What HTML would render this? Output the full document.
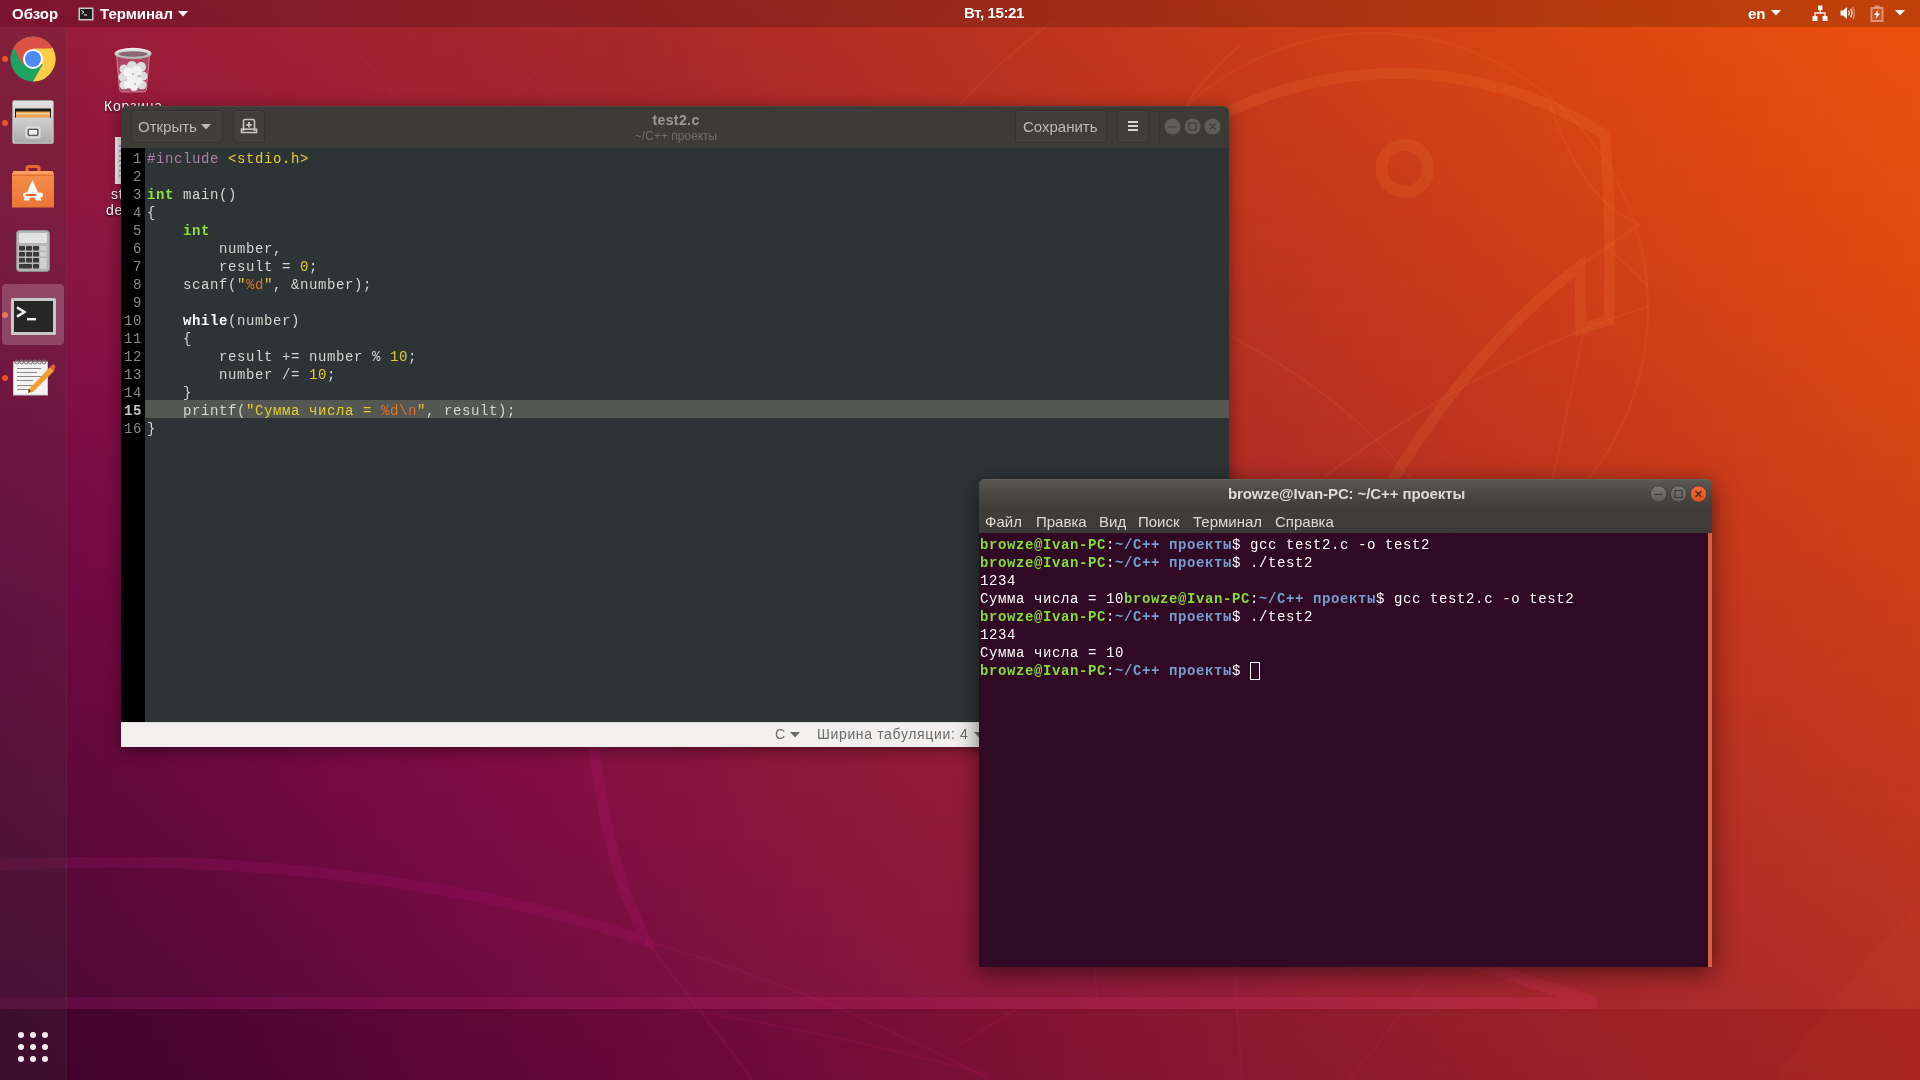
<!DOCTYPE html>
<html><head><meta charset="utf-8">
<style>
*{box-sizing:border-box;margin:0;padding:0}
html,body{width:1920px;height:1080px;overflow:hidden}
body{position:relative;font-family:"Liberation Sans",sans-serif;background:#a02030}
.abs{position:absolute}
#gedit,#term,#topbar,#dock,.dlab{will-change:transform}
#wall{position:absolute;left:0;top:0;width:1920px;height:1080px;overflow:hidden}
.ws{position:absolute;left:0;width:1920px}
#topbar{position:absolute;left:0;top:0;width:1920px;height:27px;background:rgba(0,0,0,0.18);color:#fff;font-size:15px;font-weight:bold}
#dock{position:absolute;left:0;top:27px;width:67px;height:1053px;background:rgba(62,62,56,0.2);box-shadow:inset -1px 0 rgba(255,255,255,0.03)}
.tb{font-size:15px;font-weight:bold;color:#fff;white-space:nowrap;line-height:18px;margin-top:1px}
.dot{width:6px;height:6px;border-radius:3px;background:#e95420}
.btn{border:1px solid #33322e;border-radius:4px;background:#3f3e3a;box-shadow:inset 0 1px rgba(255,255,255,0.03)}
.gt{font-size:15px;color:#bdbab3;white-space:nowrap}
.ln{color:#888a85}
.pp{color:#ad7fa8}.st{color:#e3cf2c}.ty{color:#8ae234;font-weight:bold}.sp{color:#de6e2c}
.tm{font-size:15px;color:#dfdbd2;white-space:nowrap}
.tg{color:#85dc36;font-weight:bold}.tb2{color:#729fcf;font-weight:bold}
.dlab{font-size:14px;letter-spacing:0.8px;color:#fff;white-space:nowrap;text-shadow:0 1px 2px rgba(0,0,0,0.8)}
.code{font-family:"Liberation Mono",monospace;font-size:14px;letter-spacing:0.6px;line-height:18px;white-space:pre}
</style></head>
<body>
<div id="wall"><!--WALL-->
<div class="ws" style="top:0px;height:12px;background:linear-gradient(90deg,rgb(150,26,59) 0.0%,rgb(157,30,55) 8.3%,rgb(162,34,49) 16.7%,rgb(166,38,43) 25.0%,rgb(171,41,40) 33.3%,rgb(178,45,35) 41.7%,rgb(186,50,31) 50.0%,rgb(196,55,27) 58.3%,rgb(205,61,23) 66.7%,rgb(214,66,20) 75.0%,rgb(222,71,17) 83.3%,rgb(230,76,14) 91.7%,rgb(237,81,11) 100.0%)"></div>
<div class="ws" style="top:12px;height:12px;background:linear-gradient(90deg,rgb(149,25,59) 0.0%,rgb(156,29,55) 8.3%,rgb(162,34,49) 16.7%,rgb(166,38,44) 25.0%,rgb(170,41,40) 33.3%,rgb(177,45,36) 41.7%,rgb(186,50,32) 50.0%,rgb(195,55,27) 58.3%,rgb(204,61,23) 66.7%,rgb(213,66,20) 75.0%,rgb(221,71,17) 83.3%,rgb(229,76,14) 91.7%,rgb(236,80,12) 100.0%)"></div>
<div class="ws" style="top:24px;height:12px;background:linear-gradient(90deg,rgb(149,25,60) 0.0%,rgb(156,29,56) 8.3%,rgb(161,33,49) 16.7%,rgb(165,37,44) 25.0%,rgb(169,41,40) 33.3%,rgb(176,45,36) 41.7%,rgb(185,49,32) 50.0%,rgb(194,55,28) 58.3%,rgb(204,60,24) 66.7%,rgb(212,66,20) 75.0%,rgb(221,71,17) 83.3%,rgb(228,75,15) 91.7%,rgb(236,80,12) 100.0%)"></div>
<div class="ws" style="top:36px;height:12px;background:linear-gradient(90deg,rgb(148,25,60) 0.0%,rgb(155,29,56) 8.3%,rgb(160,33,50) 16.7%,rgb(164,37,45) 25.0%,rgb(168,40,41) 33.3%,rgb(176,44,37) 41.7%,rgb(184,49,32) 50.0%,rgb(194,54,28) 58.3%,rgb(203,60,24) 66.7%,rgb(212,65,21) 75.0%,rgb(220,70,17) 83.3%,rgb(228,75,15) 91.7%,rgb(235,80,12) 100.0%)"></div>
<div class="ws" style="top:48px;height:12px;background:linear-gradient(90deg,rgb(147,24,61) 0.0%,rgb(154,28,56) 8.3%,rgb(160,33,50) 16.7%,rgb(164,36,45) 25.0%,rgb(168,40,41) 33.3%,rgb(175,44,37) 41.7%,rgb(184,49,33) 50.0%,rgb(193,54,28) 58.3%,rgb(202,60,25) 66.7%,rgb(211,65,21) 75.0%,rgb(219,70,18) 83.3%,rgb(227,75,15) 91.7%,rgb(235,79,12) 100.0%)"></div>
<div class="ws" style="top:60px;height:12px;background:linear-gradient(90deg,rgb(146,24,61) 0.0%,rgb(154,28,57) 8.3%,rgb(159,32,51) 16.7%,rgb(163,36,46) 25.0%,rgb(167,39,42) 33.3%,rgb(174,44,38) 41.7%,rgb(183,48,33) 50.0%,rgb(192,54,29) 58.3%,rgb(202,59,25) 66.7%,rgb(210,65,21) 75.0%,rgb(219,69,18) 83.3%,rgb(227,74,15) 91.7%,rgb(234,79,13) 100.0%)"></div>
<div class="ws" style="top:72px;height:12px;background:linear-gradient(90deg,rgb(146,24,61) 0.0%,rgb(153,28,57) 8.3%,rgb(158,32,51) 16.7%,rgb(162,36,46) 25.0%,rgb(167,39,42) 33.3%,rgb(174,43,38) 41.7%,rgb(183,48,33) 50.0%,rgb(192,53,29) 58.3%,rgb(201,59,25) 66.7%,rgb(210,64,21) 75.0%,rgb(218,69,18) 83.3%,rgb(226,74,16) 91.7%,rgb(233,79,13) 100.0%)"></div>
<div class="ws" style="top:84px;height:12px;background:linear-gradient(90deg,rgb(145,24,62) 0.0%,rgb(152,27,58) 8.3%,rgb(158,31,52) 16.7%,rgb(162,35,47) 25.0%,rgb(166,39,43) 33.3%,rgb(173,43,38) 41.7%,rgb(182,48,34) 50.0%,rgb(191,53,29) 58.3%,rgb(201,59,26) 66.7%,rgb(209,64,22) 75.0%,rgb(218,69,18) 83.3%,rgb(226,74,16) 91.7%,rgb(233,78,13) 100.0%)"></div>
<div class="ws" style="top:96px;height:12px;background:linear-gradient(90deg,rgb(144,23,62) 0.0%,rgb(151,27,58) 8.3%,rgb(157,31,52) 16.7%,rgb(161,35,47) 25.0%,rgb(165,38,43) 33.3%,rgb(173,42,39) 41.7%,rgb(181,47,34) 50.0%,rgb(191,53,30) 58.3%,rgb(200,59,26) 66.7%,rgb(209,64,22) 75.0%,rgb(217,68,19) 83.3%,rgb(225,73,16) 91.7%,rgb(232,78,13) 100.0%)"></div>
<div class="ws" style="top:108px;height:12px;background:linear-gradient(90deg,rgb(143,23,62) 0.0%,rgb(151,27,59) 8.3%,rgb(156,31,53) 16.7%,rgb(161,34,48) 25.0%,rgb(165,38,44) 33.3%,rgb(172,42,39) 41.7%,rgb(181,47,35) 50.0%,rgb(190,52,30) 58.3%,rgb(199,58,26) 66.7%,rgb(208,63,22) 75.0%,rgb(216,68,19) 83.3%,rgb(224,73,16) 91.7%,rgb(232,78,13) 100.0%)"></div>
<div class="ws" style="top:120px;height:12px;background:linear-gradient(90deg,rgb(143,23,63) 0.0%,rgb(150,26,59) 8.3%,rgb(156,30,53) 16.7%,rgb(160,34,48) 25.0%,rgb(164,37,44) 33.3%,rgb(171,42,40) 41.7%,rgb(180,47,35) 50.0%,rgb(189,52,31) 58.3%,rgb(199,58,27) 66.7%,rgb(207,63,23) 75.0%,rgb(216,68,19) 83.3%,rgb(224,73,17) 91.7%,rgb(231,77,14) 100.0%)"></div>
<div class="ws" style="top:132px;height:12px;background:linear-gradient(90deg,rgb(142,22,63) 0.0%,rgb(149,26,60) 8.3%,rgb(155,30,54) 16.7%,rgb(159,33,49) 25.0%,rgb(164,37,45) 33.3%,rgb(171,41,40) 41.7%,rgb(179,46,35) 50.0%,rgb(189,52,31) 58.3%,rgb(198,58,27) 66.7%,rgb(207,63,23) 75.0%,rgb(215,67,20) 83.3%,rgb(223,72,17) 91.7%,rgb(231,77,14) 100.0%)"></div>
<div class="ws" style="top:144px;height:12px;background:linear-gradient(90deg,rgb(141,22,63) 0.0%,rgb(149,26,60) 8.3%,rgb(154,29,54) 16.7%,rgb(159,33,49) 25.0%,rgb(163,36,45) 33.3%,rgb(170,41,41) 41.7%,rgb(179,46,36) 50.0%,rgb(188,51,31) 58.3%,rgb(197,57,27) 66.7%,rgb(206,62,23) 75.0%,rgb(215,67,20) 83.3%,rgb(223,72,17) 91.7%,rgb(230,77,14) 100.0%)"></div>
<div class="ws" style="top:156px;height:12px;background:linear-gradient(90deg,rgb(140,22,64) 0.0%,rgb(148,25,60) 8.3%,rgb(154,29,55) 16.7%,rgb(158,32,50) 25.0%,rgb(163,36,45) 33.3%,rgb(170,40,41) 41.7%,rgb(178,45,36) 50.0%,rgb(187,51,32) 58.3%,rgb(197,57,28) 66.7%,rgb(205,62,24) 75.0%,rgb(214,67,20) 83.3%,rgb(222,72,17) 91.7%,rgb(229,76,14) 100.0%)"></div>
<div class="ws" style="top:168px;height:12px;background:linear-gradient(90deg,rgb(139,21,64) 0.0%,rgb(147,25,61) 8.3%,rgb(153,28,55) 16.7%,rgb(157,32,50) 25.0%,rgb(162,36,46) 33.3%,rgb(169,40,41) 41.7%,rgb(178,45,37) 50.0%,rgb(187,51,32) 58.3%,rgb(196,57,28) 66.7%,rgb(205,61,24) 75.0%,rgb(213,66,20) 83.3%,rgb(222,71,18) 91.7%,rgb(229,76,15) 100.0%)"></div>
<div class="ws" style="top:180px;height:12px;background:linear-gradient(90deg,rgb(139,21,64) 0.0%,rgb(146,25,61) 8.3%,rgb(152,28,56) 16.7%,rgb(157,32,51) 25.0%,rgb(162,35,46) 33.3%,rgb(169,40,42) 41.7%,rgb(177,45,37) 50.0%,rgb(186,50,33) 58.3%,rgb(195,56,28) 66.7%,rgb(204,61,24) 75.0%,rgb(213,66,21) 83.3%,rgb(221,71,18) 91.7%,rgb(228,76,15) 100.0%)"></div>
<div class="ws" style="top:192px;height:12px;background:linear-gradient(90deg,rgb(138,21,65) 0.0%,rgb(146,24,62) 8.3%,rgb(152,28,57) 16.7%,rgb(156,31,51) 25.0%,rgb(161,35,47) 33.3%,rgb(168,39,42) 41.7%,rgb(176,44,38) 50.0%,rgb(186,50,33) 58.3%,rgb(195,56,29) 66.7%,rgb(203,61,24) 75.0%,rgb(212,65,21) 83.3%,rgb(221,70,18) 91.7%,rgb(228,75,15) 100.0%)"></div>
<div class="ws" style="top:204px;height:12px;background:linear-gradient(90deg,rgb(137,20,65) 0.0%,rgb(145,24,62) 8.3%,rgb(151,27,57) 16.7%,rgb(156,31,52) 25.0%,rgb(161,34,47) 33.3%,rgb(168,39,43) 41.7%,rgb(176,44,38) 50.0%,rgb(185,50,33) 58.3%,rgb(194,55,29) 66.7%,rgb(203,60,25) 75.0%,rgb(212,65,21) 83.3%,rgb(220,70,18) 91.7%,rgb(227,75,15) 100.0%)"></div>
<div class="ws" style="top:216px;height:12px;background:linear-gradient(90deg,rgb(136,20,65) 0.0%,rgb(144,23,63) 8.3%,rgb(150,27,58) 16.7%,rgb(155,30,53) 25.0%,rgb(160,34,48) 33.3%,rgb(167,39,43) 41.7%,rgb(175,44,38) 50.0%,rgb(184,49,34) 58.3%,rgb(193,55,29) 66.7%,rgb(202,60,25) 75.0%,rgb(211,64,22) 83.3%,rgb(219,70,19) 91.7%,rgb(226,75,16) 100.0%)"></div>
<div class="ws" style="top:228px;height:12px;background:linear-gradient(90deg,rgb(135,20,65) 0.0%,rgb(143,23,63) 8.3%,rgb(149,26,58) 16.7%,rgb(155,30,53) 25.0%,rgb(160,34,48) 33.3%,rgb(166,38,44) 41.7%,rgb(175,43,39) 50.0%,rgb(184,49,34) 58.3%,rgb(193,55,30) 66.7%,rgb(201,59,25) 75.0%,rgb(210,64,22) 83.3%,rgb(219,69,19) 91.7%,rgb(226,74,16) 100.0%)"></div>
<div class="ws" style="top:240px;height:12px;background:linear-gradient(90deg,rgb(135,19,66) 0.0%,rgb(142,23,63) 8.3%,rgb(149,26,59) 16.7%,rgb(154,29,54) 25.0%,rgb(159,33,49) 33.3%,rgb(166,38,44) 41.7%,rgb(174,43,39) 50.0%,rgb(183,48,34) 58.3%,rgb(192,54,30) 66.7%,rgb(201,59,26) 75.0%,rgb(210,64,22) 83.3%,rgb(218,69,19) 91.7%,rgb(225,74,16) 100.0%)"></div>
<div class="ws" style="top:252px;height:12px;background:linear-gradient(90deg,rgb(134,19,66) 0.0%,rgb(142,22,64) 8.3%,rgb(148,25,59) 16.7%,rgb(153,29,54) 25.0%,rgb(159,33,49) 33.3%,rgb(165,37,45) 41.7%,rgb(174,43,40) 50.0%,rgb(182,48,35) 58.3%,rgb(191,54,30) 66.7%,rgb(200,58,26) 75.0%,rgb(209,63,22) 83.3%,rgb(218,69,19) 91.7%,rgb(225,74,16) 100.0%)"></div>
<div class="ws" style="top:264px;height:12px;background:linear-gradient(90deg,rgb(133,19,66) 0.0%,rgb(141,22,64) 8.3%,rgb(147,25,60) 16.7%,rgb(153,28,55) 25.0%,rgb(158,32,50) 33.3%,rgb(165,37,45) 41.7%,rgb(173,42,40) 50.0%,rgb(182,48,35) 58.3%,rgb(191,53,31) 66.7%,rgb(199,58,26) 75.0%,rgb(208,63,23) 83.3%,rgb(217,68,20) 91.7%,rgb(224,73,16) 100.0%)"></div>
<div class="ws" style="top:276px;height:12px;background:linear-gradient(90deg,rgb(132,18,67) 0.0%,rgb(140,21,65) 8.3%,rgb(147,24,60) 16.7%,rgb(152,28,55) 25.0%,rgb(158,32,50) 33.3%,rgb(164,37,45) 41.7%,rgb(172,42,40) 50.0%,rgb(181,47,36) 58.3%,rgb(190,53,31) 66.7%,rgb(199,58,27) 75.0%,rgb(208,62,23) 83.3%,rgb(216,68,20) 91.7%,rgb(223,73,17) 100.0%)"></div>
<div class="ws" style="top:288px;height:12px;background:linear-gradient(90deg,rgb(131,18,67) 0.0%,rgb(139,21,65) 8.3%,rgb(146,24,61) 16.7%,rgb(152,27,56) 25.0%,rgb(157,31,51) 33.3%,rgb(164,36,46) 41.7%,rgb(172,41,41) 50.0%,rgb(180,47,36) 58.3%,rgb(189,52,31) 66.7%,rgb(198,57,27) 75.0%,rgb(207,62,23) 83.3%,rgb(216,67,20) 91.7%,rgb(223,72,17) 100.0%)"></div>
<div class="ws" style="top:300px;height:12px;background:linear-gradient(90deg,rgb(130,17,67) 0.0%,rgb(138,20,65) 8.3%,rgb(145,23,61) 16.7%,rgb(151,27,56) 25.0%,rgb(157,31,51) 33.3%,rgb(163,36,46) 41.7%,rgb(171,41,41) 50.0%,rgb(180,47,36) 58.3%,rgb(189,52,32) 66.7%,rgb(197,57,27) 75.0%,rgb(206,61,24) 83.3%,rgb(215,67,21) 91.7%,rgb(222,72,17) 100.0%)"></div>
<div class="ws" style="top:312px;height:12px;background:linear-gradient(90deg,rgb(129,17,67) 0.0%,rgb(138,20,66) 8.3%,rgb(145,23,62) 16.7%,rgb(150,26,57) 25.0%,rgb(156,31,52) 33.3%,rgb(163,36,47) 41.7%,rgb(171,41,42) 50.0%,rgb(179,46,37) 58.3%,rgb(188,51,32) 66.7%,rgb(197,56,28) 75.0%,rgb(206,61,24) 83.3%,rgb(214,66,21) 91.7%,rgb(221,72,17) 100.0%)"></div>
<div class="ws" style="top:324px;height:12px;background:linear-gradient(90deg,rgb(128,16,67) 0.0%,rgb(137,19,66) 8.3%,rgb(144,22,62) 16.7%,rgb(150,26,57) 25.0%,rgb(156,30,52) 33.3%,rgb(162,35,47) 41.7%,rgb(170,40,42) 50.0%,rgb(179,46,37) 58.3%,rgb(187,51,33) 66.7%,rgb(196,56,28) 75.0%,rgb(205,61,24) 83.3%,rgb(214,66,21) 91.7%,rgb(221,71,18) 100.0%)"></div>
<div class="ws" style="top:336px;height:12px;background:linear-gradient(90deg,rgb(128,16,68) 0.0%,rgb(136,19,66) 8.3%,rgb(143,22,63) 16.7%,rgb(149,25,58) 25.0%,rgb(155,30,53) 33.3%,rgb(162,35,48) 41.7%,rgb(170,40,42) 50.0%,rgb(178,45,38) 58.3%,rgb(187,50,33) 66.7%,rgb(195,55,28) 75.0%,rgb(204,60,25) 83.3%,rgb(213,66,21) 91.7%,rgb(220,71,18) 100.0%)"></div>
<div class="ws" style="top:348px;height:12px;background:linear-gradient(90deg,rgb(127,15,68) 0.0%,rgb(135,18,67) 8.3%,rgb(142,21,63) 16.7%,rgb(149,25,58) 25.0%,rgb(155,29,53) 33.3%,rgb(161,34,48) 41.7%,rgb(169,40,43) 50.0%,rgb(177,45,38) 58.3%,rgb(186,50,33) 66.7%,rgb(195,55,29) 75.0%,rgb(204,60,25) 83.3%,rgb(212,65,22) 91.7%,rgb(219,71,18) 100.0%)"></div>
<div class="ws" style="top:360px;height:12px;background:linear-gradient(90deg,rgb(126,15,68) 0.0%,rgb(134,17,67) 8.3%,rgb(142,20,63) 16.7%,rgb(148,24,59) 25.0%,rgb(154,29,54) 33.3%,rgb(161,34,48) 41.7%,rgb(168,39,43) 50.0%,rgb(177,45,38) 58.3%,rgb(185,50,34) 66.7%,rgb(194,54,29) 75.0%,rgb(203,59,25) 83.3%,rgb(211,65,22) 91.7%,rgb(219,70,18) 100.0%)"></div>
<div class="ws" style="top:372px;height:12px;background:linear-gradient(90deg,rgb(125,14,68) 0.0%,rgb(133,17,67) 8.3%,rgb(141,20,64) 16.7%,rgb(147,24,59) 25.0%,rgb(153,28,54) 33.3%,rgb(160,34,49) 41.7%,rgb(168,39,44) 50.0%,rgb(176,44,39) 58.3%,rgb(185,49,34) 66.7%,rgb(193,54,30) 75.0%,rgb(202,59,26) 83.3%,rgb(211,64,22) 91.7%,rgb(218,70,19) 100.0%)"></div>
<div class="ws" style="top:384px;height:12px;background:linear-gradient(90deg,rgb(124,14,68) 0.0%,rgb(133,16,67) 8.3%,rgb(140,19,64) 16.7%,rgb(147,23,60) 25.0%,rgb(153,28,55) 33.3%,rgb(160,33,49) 41.7%,rgb(167,39,44) 50.0%,rgb(175,44,39) 58.3%,rgb(184,49,34) 66.7%,rgb(193,53,30) 75.0%,rgb(202,58,26) 83.3%,rgb(210,64,22) 91.7%,rgb(217,69,19) 100.0%)"></div>
<div class="ws" style="top:396px;height:12px;background:linear-gradient(90deg,rgb(123,14,68) 0.0%,rgb(132,16,68) 8.3%,rgb(140,19,65) 16.7%,rgb(146,23,60) 25.0%,rgb(152,28,55) 33.3%,rgb(159,33,50) 41.7%,rgb(167,38,44) 50.0%,rgb(175,43,39) 58.3%,rgb(183,48,35) 66.7%,rgb(192,53,30) 75.0%,rgb(201,58,27) 83.3%,rgb(209,63,23) 91.7%,rgb(217,69,19) 100.0%)"></div>
<div class="ws" style="top:408px;height:12px;background:linear-gradient(90deg,rgb(122,13,68) 0.0%,rgb(131,15,68) 8.3%,rgb(139,18,65) 16.7%,rgb(146,22,61) 25.0%,rgb(152,27,56) 33.3%,rgb(159,33,50) 41.7%,rgb(166,38,45) 50.0%,rgb(174,43,40) 58.3%,rgb(183,48,35) 66.7%,rgb(191,53,31) 75.0%,rgb(200,57,27) 83.3%,rgb(209,63,23) 91.7%,rgb(216,69,19) 100.0%)"></div>
<div class="ws" style="top:420px;height:12px;background:linear-gradient(90deg,rgb(121,13,68) 0.0%,rgb(130,15,68) 8.3%,rgb(138,18,65) 16.7%,rgb(145,22,61) 25.0%,rgb(151,27,56) 33.3%,rgb(158,32,51) 41.7%,rgb(166,38,45) 50.0%,rgb(174,43,40) 58.3%,rgb(182,47,35) 66.7%,rgb(191,52,31) 75.0%,rgb(200,57,27) 83.3%,rgb(208,63,23) 91.7%,rgb(215,68,20) 100.0%)"></div>
<div class="ws" style="top:432px;height:12px;background:linear-gradient(90deg,rgb(120,12,68) 0.0%,rgb(129,14,68) 8.3%,rgb(137,17,66) 16.7%,rgb(144,21,62) 25.0%,rgb(151,26,57) 33.3%,rgb(157,32,51) 41.7%,rgb(165,37,46) 50.0%,rgb(173,42,41) 58.3%,rgb(181,47,36) 66.7%,rgb(190,52,32) 75.0%,rgb(199,57,28) 83.3%,rgb(207,62,24) 91.7%,rgb(214,68,20) 100.0%)"></div>
<div class="ws" style="top:444px;height:12px;background:linear-gradient(90deg,rgb(119,12,68) 0.0%,rgb(128,14,68) 8.3%,rgb(137,17,66) 16.7%,rgb(144,21,62) 25.0%,rgb(150,26,57) 33.3%,rgb(157,31,51) 41.7%,rgb(164,37,46) 50.0%,rgb(172,42,41) 58.3%,rgb(181,47,36) 66.7%,rgb(189,51,32) 75.0%,rgb(198,56,28) 83.3%,rgb(206,62,24) 91.7%,rgb(214,67,20) 100.0%)"></div>
<div class="ws" style="top:456px;height:12px;background:linear-gradient(90deg,rgb(118,11,68) 0.0%,rgb(127,13,69) 8.3%,rgb(136,16,66) 16.7%,rgb(143,21,62) 25.0%,rgb(150,26,57) 33.3%,rgb(156,31,52) 41.7%,rgb(164,37,46) 50.0%,rgb(172,42,41) 58.3%,rgb(180,46,37) 66.7%,rgb(189,51,32) 75.0%,rgb(198,56,28) 83.3%,rgb(206,61,24) 91.7%,rgb(213,67,20) 100.0%)"></div>
<div class="ws" style="top:468px;height:12px;background:linear-gradient(90deg,rgb(117,11,68) 0.0%,rgb(126,13,69) 8.3%,rgb(135,16,67) 16.7%,rgb(143,20,63) 25.0%,rgb(149,25,58) 33.3%,rgb(156,31,52) 41.7%,rgb(163,36,47) 50.0%,rgb(171,41,42) 58.3%,rgb(179,46,37) 66.7%,rgb(188,50,33) 75.0%,rgb(197,55,29) 83.3%,rgb(205,61,25) 91.7%,rgb(212,67,21) 100.0%)"></div>
<div class="ws" style="top:480px;height:12px;background:linear-gradient(90deg,rgb(116,11,68) 0.0%,rgb(126,12,69) 8.3%,rgb(134,16,67) 16.7%,rgb(142,20,63) 25.0%,rgb(149,25,58) 33.3%,rgb(155,30,52) 41.7%,rgb(163,36,47) 50.0%,rgb(171,41,42) 58.3%,rgb(179,45,37) 66.7%,rgb(188,50,33) 75.0%,rgb(196,55,29) 83.3%,rgb(204,61,25) 91.7%,rgb(211,66,21) 100.0%)"></div>
<div class="ws" style="top:492px;height:12px;background:linear-gradient(90deg,rgb(115,10,68) 0.0%,rgb(125,12,69) 8.3%,rgb(134,15,67) 16.7%,rgb(141,19,64) 25.0%,rgb(148,24,59) 33.3%,rgb(155,30,53) 41.7%,rgb(162,36,47) 50.0%,rgb(170,40,43) 58.3%,rgb(178,45,38) 66.7%,rgb(187,50,33) 75.0%,rgb(195,55,29) 83.3%,rgb(203,60,25) 91.7%,rgb(211,66,21) 100.0%)"></div>
<div class="ws" style="top:504px;height:12px;background:linear-gradient(90deg,rgb(114,10,68) 0.0%,rgb(124,11,69) 8.3%,rgb(133,15,67) 16.7%,rgb(141,19,64) 25.0%,rgb(147,24,59) 33.3%,rgb(154,30,53) 41.7%,rgb(161,35,48) 50.0%,rgb(169,40,43) 58.3%,rgb(178,45,38) 66.7%,rgb(186,49,34) 75.0%,rgb(195,54,30) 83.3%,rgb(203,60,25) 91.7%,rgb(210,65,21) 100.0%)"></div>
<div class="ws" style="top:516px;height:12px;background:linear-gradient(90deg,rgb(113,10,68) 0.0%,rgb(123,11,69) 8.3%,rgb(132,14,67) 16.7%,rgb(140,18,64) 25.0%,rgb(147,24,59) 33.3%,rgb(154,29,54) 41.7%,rgb(161,35,48) 50.0%,rgb(169,40,43) 58.3%,rgb(177,44,39) 66.7%,rgb(186,49,34) 75.0%,rgb(194,54,30) 83.3%,rgb(202,59,26) 91.7%,rgb(209,65,22) 100.0%)"></div>
<div class="ws" style="top:528px;height:12px;background:linear-gradient(90deg,rgb(112,9,67) 0.0%,rgb(122,11,69) 8.3%,rgb(131,14,68) 16.7%,rgb(140,18,65) 25.0%,rgb(146,23,60) 33.3%,rgb(153,29,54) 41.7%,rgb(160,35,49) 50.0%,rgb(168,39,44) 58.3%,rgb(176,44,39) 66.7%,rgb(185,48,35) 75.0%,rgb(193,53,30) 83.3%,rgb(201,59,26) 91.7%,rgb(209,65,22) 100.0%)"></div>
<div class="ws" style="top:540px;height:12px;background:linear-gradient(90deg,rgb(111,9,67) 0.0%,rgb(121,10,68) 8.3%,rgb(131,13,68) 16.7%,rgb(139,18,65) 25.0%,rgb(146,23,60) 33.3%,rgb(152,29,54) 41.7%,rgb(160,34,49) 50.0%,rgb(168,39,44) 58.3%,rgb(176,44,40) 66.7%,rgb(184,48,35) 75.0%,rgb(193,53,31) 83.3%,rgb(201,59,26) 91.7%,rgb(208,64,22) 100.0%)"></div>
<div class="ws" style="top:552px;height:12px;background:linear-gradient(90deg,rgb(110,9,67) 0.0%,rgb(120,10,68) 8.3%,rgb(130,13,68) 16.7%,rgb(138,17,65) 25.0%,rgb(145,23,60) 33.3%,rgb(152,29,55) 41.7%,rgb(159,34,49) 50.0%,rgb(167,39,45) 58.3%,rgb(175,43,40) 66.7%,rgb(184,48,35) 75.0%,rgb(192,53,31) 83.3%,rgb(200,58,27) 91.7%,rgb(207,64,23) 100.0%)"></div>
<div class="ws" style="top:564px;height:12px;background:linear-gradient(90deg,rgb(109,9,66) 0.0%,rgb(119,10,68) 8.3%,rgb(129,13,68) 16.7%,rgb(138,17,66) 25.0%,rgb(145,22,61) 33.3%,rgb(151,28,55) 41.7%,rgb(158,34,50) 50.0%,rgb(166,38,45) 58.3%,rgb(175,43,40) 66.7%,rgb(183,47,36) 75.0%,rgb(191,52,32) 83.3%,rgb(199,58,27) 91.7%,rgb(206,63,23) 100.0%)"></div>
<div class="ws" style="top:576px;height:12px;background:linear-gradient(90deg,rgb(108,9,66) 0.0%,rgb(118,10,68) 8.3%,rgb(128,12,68) 16.7%,rgb(137,16,66) 25.0%,rgb(144,22,61) 33.3%,rgb(151,28,55) 41.7%,rgb(158,33,50) 50.0%,rgb(166,38,45) 58.3%,rgb(174,42,41) 66.7%,rgb(182,47,36) 75.0%,rgb(191,52,32) 83.3%,rgb(198,57,27) 91.7%,rgb(206,63,23) 100.0%)"></div>
<div class="ws" style="top:588px;height:12px;background:linear-gradient(90deg,rgb(107,8,66) 0.0%,rgb(117,10,68) 8.3%,rgb(128,12,68) 16.7%,rgb(136,16,66) 25.0%,rgb(143,22,61) 33.3%,rgb(150,28,55) 41.7%,rgb(157,33,50) 50.0%,rgb(165,38,46) 58.3%,rgb(173,42,41) 66.7%,rgb(182,47,37) 75.0%,rgb(190,51,32) 83.3%,rgb(198,57,28) 91.7%,rgb(205,63,24) 100.0%)"></div>
<div class="ws" style="top:600px;height:12px;background:linear-gradient(90deg,rgb(106,8,65) 0.0%,rgb(116,9,67) 8.3%,rgb(127,12,68) 16.7%,rgb(136,16,66) 25.0%,rgb(143,21,62) 33.3%,rgb(149,27,56) 41.7%,rgb(157,33,51) 50.0%,rgb(165,37,46) 58.3%,rgb(173,42,42) 66.7%,rgb(181,46,37) 75.0%,rgb(189,51,33) 83.3%,rgb(197,56,28) 91.7%,rgb(204,62,24) 100.0%)"></div>
<div class="ws" style="top:612px;height:12px;background:linear-gradient(90deg,rgb(105,8,65) 0.0%,rgb(115,9,67) 8.3%,rgb(126,12,68) 16.7%,rgb(135,15,67) 25.0%,rgb(142,21,62) 33.3%,rgb(149,27,56) 41.7%,rgb(156,32,51) 50.0%,rgb(164,37,46) 58.3%,rgb(172,41,42) 66.7%,rgb(180,46,38) 75.0%,rgb(189,51,33) 83.3%,rgb(196,56,28) 91.7%,rgb(204,62,24) 100.0%)"></div>
<div class="ws" style="top:624px;height:12px;background:linear-gradient(90deg,rgb(104,8,64) 0.0%,rgb(115,9,66) 8.3%,rgb(125,11,68) 16.7%,rgb(134,15,67) 25.0%,rgb(141,21,62) 33.3%,rgb(148,27,56) 41.7%,rgb(155,32,51) 50.0%,rgb(163,37,47) 58.3%,rgb(172,41,42) 66.7%,rgb(180,45,38) 75.0%,rgb(188,50,33) 83.3%,rgb(195,56,29) 91.7%,rgb(203,61,25) 100.0%)"></div>
<div class="ws" style="top:636px;height:12px;background:linear-gradient(90deg,rgb(103,8,64) 0.0%,rgb(114,9,66) 8.3%,rgb(125,11,68) 16.7%,rgb(134,15,67) 25.0%,rgb(141,20,62) 33.3%,rgb(148,27,57) 41.7%,rgb(155,32,52) 50.0%,rgb(163,36,47) 58.3%,rgb(171,41,43) 66.7%,rgb(179,45,38) 75.0%,rgb(187,50,34) 83.3%,rgb(195,55,29) 91.7%,rgb(202,61,25) 100.0%)"></div>
<div class="ws" style="top:648px;height:12px;background:linear-gradient(90deg,rgb(102,8,63) 0.0%,rgb(113,9,66) 8.3%,rgb(124,11,68) 16.7%,rgb(133,14,67) 25.0%,rgb(140,20,63) 33.3%,rgb(147,26,57) 41.7%,rgb(154,32,52) 50.0%,rgb(162,36,48) 58.3%,rgb(170,40,43) 66.7%,rgb(179,45,39) 75.0%,rgb(186,49,34) 83.3%,rgb(194,55,30) 91.7%,rgb(201,60,25) 100.0%)"></div>
<div class="ws" style="top:660px;height:12px;background:linear-gradient(90deg,rgb(101,8,63) 0.0%,rgb(112,9,65) 8.3%,rgb(123,11,68) 16.7%,rgb(132,14,68) 25.0%,rgb(140,20,63) 33.3%,rgb(146,26,57) 41.7%,rgb(154,31,52) 50.0%,rgb(162,36,48) 58.3%,rgb(170,40,44) 66.7%,rgb(178,44,39) 75.0%,rgb(186,49,35) 83.3%,rgb(193,54,30) 91.7%,rgb(201,60,26) 100.0%)"></div>
<div class="ws" style="top:672px;height:12px;background:linear-gradient(90deg,rgb(100,8,62) 0.0%,rgb(111,9,65) 8.3%,rgb(122,10,68) 16.7%,rgb(132,14,68) 25.0%,rgb(139,19,63) 33.3%,rgb(146,26,57) 41.7%,rgb(153,31,52) 50.0%,rgb(161,35,48) 58.3%,rgb(169,40,44) 66.7%,rgb(177,44,40) 75.0%,rgb(185,49,35) 83.3%,rgb(193,54,30) 91.7%,rgb(200,59,26) 100.0%)"></div>
<div class="ws" style="top:684px;height:12px;background:linear-gradient(90deg,rgb(99,8,62) 0.0%,rgb(110,9,64) 8.3%,rgb(121,10,68) 16.7%,rgb(131,13,68) 25.0%,rgb(138,19,63) 33.3%,rgb(145,25,58) 41.7%,rgb(152,31,53) 50.0%,rgb(160,35,49) 58.3%,rgb(169,39,45) 66.7%,rgb(177,44,40) 75.0%,rgb(184,48,35) 83.3%,rgb(192,54,31) 91.7%,rgb(199,59,26) 100.0%)"></div>
<div class="ws" style="top:696px;height:12px;background:linear-gradient(90deg,rgb(98,8,61) 0.0%,rgb(109,9,64) 8.3%,rgb(121,10,68) 16.7%,rgb(130,13,68) 25.0%,rgb(138,19,63) 33.3%,rgb(144,25,58) 41.7%,rgb(152,31,53) 50.0%,rgb(160,35,49) 58.3%,rgb(168,39,45) 66.7%,rgb(176,43,40) 75.0%,rgb(184,48,36) 83.3%,rgb(191,53,31) 91.7%,rgb(198,58,27) 100.0%)"></div>
<div class="ws" style="top:708px;height:12px;background:linear-gradient(90deg,rgb(97,8,60) 0.0%,rgb(108,9,63) 8.3%,rgb(120,10,68) 16.7%,rgb(130,13,68) 25.0%,rgb(137,19,64) 33.3%,rgb(144,25,58) 41.7%,rgb(151,30,53) 50.0%,rgb(159,34,50) 58.3%,rgb(167,39,45) 66.7%,rgb(175,43,41) 75.0%,rgb(183,48,36) 83.3%,rgb(190,53,31) 91.7%,rgb(198,58,27) 100.0%)"></div>
<div class="ws" style="top:720px;height:12px;background:linear-gradient(90deg,rgb(96,8,60) 0.0%,rgb(107,9,63) 8.3%,rgb(119,10,68) 16.7%,rgb(129,13,68) 25.0%,rgb(136,18,64) 33.3%,rgb(143,25,58) 41.7%,rgb(151,30,54) 50.0%,rgb(159,34,50) 58.3%,rgb(167,38,46) 66.7%,rgb(175,42,41) 75.0%,rgb(182,47,36) 83.3%,rgb(190,52,32) 91.7%,rgb(197,58,27) 100.0%)"></div>
<div class="ws" style="top:732px;height:12px;background:linear-gradient(90deg,rgb(95,8,59) 0.0%,rgb(106,9,62) 8.3%,rgb(118,9,67) 16.7%,rgb(128,12,68) 25.0%,rgb(135,18,64) 33.3%,rgb(142,25,58) 41.7%,rgb(150,30,54) 50.0%,rgb(158,34,50) 58.3%,rgb(166,38,46) 66.7%,rgb(174,42,42) 75.0%,rgb(182,47,37) 83.3%,rgb(189,52,32) 91.7%,rgb(196,57,28) 100.0%)"></div>
<div class="ws" style="top:744px;height:12px;background:linear-gradient(90deg,rgb(94,8,59) 0.0%,rgb(105,9,62) 8.3%,rgb(117,9,67) 16.7%,rgb(128,12,68) 25.0%,rgb(135,18,64) 33.3%,rgb(142,24,59) 41.7%,rgb(149,29,54) 50.0%,rgb(158,34,51) 58.3%,rgb(166,38,47) 66.7%,rgb(173,42,42) 75.0%,rgb(181,46,37) 83.3%,rgb(188,51,33) 91.7%,rgb(196,57,28) 100.0%)"></div>
<div class="ws" style="top:756px;height:12px;background:linear-gradient(90deg,rgb(93,8,58) 0.0%,rgb(104,9,61) 8.3%,rgb(116,9,67) 16.7%,rgb(127,12,68) 25.0%,rgb(134,18,64) 33.3%,rgb(141,24,59) 41.7%,rgb(149,29,54) 50.0%,rgb(157,33,51) 58.3%,rgb(165,37,47) 66.7%,rgb(173,41,42) 75.0%,rgb(180,46,38) 83.3%,rgb(188,51,33) 91.7%,rgb(195,56,29) 100.0%)"></div>
<div class="ws" style="top:768px;height:12px;background:linear-gradient(90deg,rgb(92,8,58) 0.0%,rgb(103,9,61) 8.3%,rgb(115,9,67) 16.7%,rgb(126,12,68) 25.0%,rgb(133,17,64) 33.3%,rgb(140,24,59) 41.7%,rgb(148,29,55) 50.0%,rgb(156,33,51) 58.3%,rgb(164,37,47) 66.7%,rgb(172,41,43) 75.0%,rgb(180,46,38) 83.3%,rgb(187,51,33) 91.7%,rgb(194,56,29) 100.0%)"></div>
<div class="ws" style="top:780px;height:12px;background:linear-gradient(90deg,rgb(91,9,57) 0.0%,rgb(102,9,60) 8.3%,rgb(115,9,67) 16.7%,rgb(125,12,68) 25.0%,rgb(133,17,64) 33.3%,rgb(140,24,59) 41.7%,rgb(147,29,55) 50.0%,rgb(156,33,52) 58.3%,rgb(164,37,48) 66.7%,rgb(171,41,43) 75.0%,rgb(179,45,38) 83.3%,rgb(186,50,34) 91.7%,rgb(193,55,29) 100.0%)"></div>
<div class="ws" style="top:792px;height:12px;background:linear-gradient(90deg,rgb(90,9,57) 0.0%,rgb(101,9,60) 8.3%,rgb(114,9,66) 16.7%,rgb(124,11,68) 25.0%,rgb(132,17,64) 33.3%,rgb(139,23,59) 41.7%,rgb(147,28,55) 50.0%,rgb(155,32,52) 58.3%,rgb(163,36,48) 66.7%,rgb(171,40,44) 75.0%,rgb(178,45,39) 83.3%,rgb(186,50,34) 91.7%,rgb(193,55,30) 100.0%)"></div>
<div class="ws" style="top:804px;height:12px;background:linear-gradient(90deg,rgb(89,9,57) 0.0%,rgb(100,9,59) 8.3%,rgb(113,9,66) 16.7%,rgb(123,11,68) 25.0%,rgb(131,17,65) 33.3%,rgb(138,23,59) 41.7%,rgb(146,28,56) 50.0%,rgb(155,32,53) 58.3%,rgb(163,36,49) 66.7%,rgb(170,40,44) 75.0%,rgb(178,45,39) 83.3%,rgb(185,49,34) 91.7%,rgb(192,54,30) 100.0%)"></div>
<div class="ws" style="top:816px;height:12px;background:linear-gradient(90deg,rgb(88,8,56) 0.0%,rgb(99,9,59) 8.3%,rgb(112,9,66) 16.7%,rgb(123,11,68) 25.0%,rgb(130,17,65) 33.3%,rgb(137,23,60) 41.7%,rgb(145,28,56) 50.0%,rgb(154,32,53) 58.3%,rgb(162,36,49) 66.7%,rgb(169,40,44) 75.0%,rgb(177,44,39) 83.3%,rgb(184,49,35) 91.7%,rgb(191,54,30) 100.0%)"></div>
<div class="ws" style="top:828px;height:12px;background:linear-gradient(90deg,rgb(87,8,56) 0.0%,rgb(98,9,59) 8.3%,rgb(111,9,65) 16.7%,rgb(122,11,68) 25.0%,rgb(130,17,65) 33.3%,rgb(137,23,60) 41.7%,rgb(145,27,56) 50.0%,rgb(153,31,53) 58.3%,rgb(161,35,49) 66.7%,rgb(169,39,45) 75.0%,rgb(176,44,40) 83.3%,rgb(183,49,35) 91.7%,rgb(191,54,31) 100.0%)"></div>
<div class="ws" style="top:840px;height:12px;background:linear-gradient(90deg,rgb(86,8,56) 0.0%,rgb(97,9,58) 8.3%,rgb(110,9,65) 16.7%,rgb(121,11,68) 25.0%,rgb(129,16,65) 33.3%,rgb(136,22,60) 41.7%,rgb(144,27,57) 50.0%,rgb(153,31,54) 58.3%,rgb(161,35,50) 66.7%,rgb(168,39,45) 75.0%,rgb(176,43,40) 83.3%,rgb(183,48,35) 91.7%,rgb(190,53,31) 100.0%)"></div>
<div class="ws" style="top:852px;height:12px;background:linear-gradient(90deg,rgb(85,8,55) 0.0%,rgb(96,9,58) 8.3%,rgb(109,9,65) 16.7%,rgb(120,11,67) 25.0%,rgb(128,16,65) 33.3%,rgb(135,22,60) 41.7%,rgb(144,27,57) 50.0%,rgb(152,31,54) 58.3%,rgb(160,35,50) 66.7%,rgb(168,39,45) 75.0%,rgb(175,43,41) 83.3%,rgb(182,48,36) 91.7%,rgb(189,53,31) 100.0%)"></div>
<div class="ws" style="top:864px;height:12px;background:linear-gradient(90deg,rgb(84,8,55) 0.0%,rgb(95,9,58) 8.3%,rgb(108,9,64) 16.7%,rgb(119,11,67) 25.0%,rgb(127,16,65) 33.3%,rgb(135,22,60) 41.7%,rgb(143,27,57) 50.0%,rgb(151,30,54) 58.3%,rgb(159,34,51) 66.7%,rgb(167,38,46) 75.0%,rgb(174,43,41) 83.3%,rgb(181,47,36) 91.7%,rgb(188,52,32) 100.0%)"></div>
<div class="ws" style="top:876px;height:12px;background:linear-gradient(90deg,rgb(83,8,55) 0.0%,rgb(94,9,58) 8.3%,rgb(107,9,64) 16.7%,rgb(118,11,67) 25.0%,rgb(126,16,65) 33.3%,rgb(134,22,61) 41.7%,rgb(142,26,57) 50.0%,rgb(151,30,55) 58.3%,rgb(159,34,51) 66.7%,rgb(166,38,46) 75.0%,rgb(173,42,41) 83.3%,rgb(181,47,37) 91.7%,rgb(188,52,32) 100.0%)"></div>
<div class="ws" style="top:888px;height:12px;background:linear-gradient(90deg,rgb(83,8,55) 0.0%,rgb(93,9,58) 8.3%,rgb(106,9,64) 16.7%,rgb(117,11,67) 25.0%,rgb(125,16,65) 33.3%,rgb(133,21,61) 41.7%,rgb(142,26,58) 50.0%,rgb(150,30,55) 58.3%,rgb(158,34,51) 66.7%,rgb(166,38,47) 75.0%,rgb(173,42,42) 83.3%,rgb(180,47,37) 91.7%,rgb(187,52,32) 100.0%)"></div>
<div class="ws" style="top:900px;height:12px;background:linear-gradient(90deg,rgb(82,8,54) 0.0%,rgb(92,9,57) 8.3%,rgb(105,9,63) 16.7%,rgb(116,11,66) 25.0%,rgb(125,16,65) 33.3%,rgb(133,21,61) 41.7%,rgb(141,26,58) 50.0%,rgb(150,29,56) 58.3%,rgb(157,33,52) 66.7%,rgb(165,37,47) 75.0%,rgb(172,42,42) 83.3%,rgb(179,46,37) 91.7%,rgb(186,51,33) 100.0%)"></div>
<div class="ws" style="top:912px;height:12px;background:linear-gradient(90deg,rgb(81,8,54) 0.0%,rgb(91,9,57) 8.3%,rgb(104,9,63) 16.7%,rgb(115,11,66) 25.0%,rgb(124,15,64) 33.3%,rgb(132,21,61) 41.7%,rgb(140,25,58) 50.0%,rgb(149,29,56) 58.3%,rgb(157,33,52) 66.7%,rgb(164,37,47) 75.0%,rgb(171,41,42) 83.3%,rgb(178,46,38) 91.7%,rgb(186,51,33) 100.0%)"></div>
<div class="ws" style="top:924px;height:12px;background:linear-gradient(90deg,rgb(80,8,54) 0.0%,rgb(91,9,57) 8.3%,rgb(103,9,62) 16.7%,rgb(114,11,66) 25.0%,rgb(123,15,64) 33.3%,rgb(131,21,61) 41.7%,rgb(140,25,59) 50.0%,rgb(148,29,56) 58.3%,rgb(156,33,52) 66.7%,rgb(164,37,48) 75.0%,rgb(171,41,43) 83.3%,rgb(178,46,38) 91.7%,rgb(185,51,33) 100.0%)"></div>
<div class="ws" style="top:936px;height:12px;background:linear-gradient(90deg,rgb(79,8,54) 0.0%,rgb(90,9,57) 8.3%,rgb(102,9,62) 16.7%,rgb(113,11,65) 25.0%,rgb(122,15,64) 33.3%,rgb(130,20,61) 41.7%,rgb(139,25,59) 50.0%,rgb(148,28,57) 58.3%,rgb(155,32,53) 66.7%,rgb(163,36,48) 75.0%,rgb(170,41,43) 83.3%,rgb(177,45,38) 91.7%,rgb(184,50,34) 100.0%)"></div>
<div class="ws" style="top:948px;height:12px;background:linear-gradient(90deg,rgb(78,8,54) 0.0%,rgb(89,9,57) 8.3%,rgb(101,9,62) 16.7%,rgb(112,11,65) 25.0%,rgb(121,15,64) 33.3%,rgb(130,20,61) 41.7%,rgb(138,25,59) 50.0%,rgb(147,28,57) 58.3%,rgb(155,32,53) 66.7%,rgb(162,36,48) 75.0%,rgb(169,40,43) 83.3%,rgb(176,45,39) 91.7%,rgb(184,50,34) 100.0%)"></div>
<div class="ws" style="top:960px;height:12px;background:linear-gradient(90deg,rgb(77,7,54) 0.0%,rgb(88,9,56) 8.3%,rgb(100,9,61) 16.7%,rgb(111,11,65) 25.0%,rgb(120,15,64) 33.3%,rgb(129,20,62) 41.7%,rgb(138,24,59) 50.0%,rgb(146,28,57) 58.3%,rgb(154,32,53) 66.7%,rgb(161,36,49) 75.0%,rgb(169,40,44) 83.3%,rgb(176,45,39) 91.7%,rgb(183,49,34) 100.0%)"></div>
<div class="ws" style="top:972px;height:12px;background:linear-gradient(90deg,rgb(76,7,54) 0.0%,rgb(87,9,56) 8.3%,rgb(99,9,61) 16.7%,rgb(110,11,65) 25.0%,rgb(120,15,64) 33.3%,rgb(128,20,62) 41.7%,rgb(137,24,59) 50.0%,rgb(146,28,57) 58.3%,rgb(153,31,54) 66.7%,rgb(161,35,49) 75.0%,rgb(168,40,44) 83.3%,rgb(175,44,39) 91.7%,rgb(182,49,35) 100.0%)"></div>
<div class="ws" style="top:984px;height:12px;background:linear-gradient(90deg,rgb(75,7,54) 0.0%,rgb(86,9,56) 8.3%,rgb(98,9,61) 16.7%,rgb(109,11,64) 25.0%,rgb(119,15,64) 33.3%,rgb(127,19,62) 41.7%,rgb(136,24,60) 50.0%,rgb(145,27,58) 58.3%,rgb(153,31,54) 66.7%,rgb(160,35,49) 75.0%,rgb(167,39,44) 83.3%,rgb(174,44,40) 91.7%,rgb(181,49,35) 100.0%)"></div>
<div class="ws" style="top:996px;height:12px;background:linear-gradient(90deg,rgb(75,7,54) 0.0%,rgb(85,9,56) 8.3%,rgb(97,9,61) 16.7%,rgb(108,11,64) 25.0%,rgb(118,15,64) 33.3%,rgb(127,19,62) 41.7%,rgb(135,23,60) 50.0%,rgb(144,27,58) 58.3%,rgb(152,31,54) 66.7%,rgb(159,35,49) 75.0%,rgb(167,39,45) 83.3%,rgb(174,44,40) 91.7%,rgb(181,48,35) 100.0%)"></div>
<div class="ws" style="top:1008px;height:1px;background:linear-gradient(90deg,rgb(74,7,53) 0.0%,rgb(85,9,56) 8.3%,rgb(96,9,60) 16.7%,rgb(108,11,64) 25.0%,rgb(117,15,64) 33.3%,rgb(126,19,62) 41.7%,rgb(135,23,60) 50.0%,rgb(144,27,58) 58.3%,rgb(152,31,54) 66.7%,rgb(159,35,50) 75.0%,rgb(166,39,45) 83.3%,rgb(173,43,40) 91.7%,rgb(180,48,36) 100.0%)"></div>
<div class="ws" style="top:1009px;height:11px;background:linear-gradient(90deg,rgb(63,3,43) 0.0%,rgb(74,4,48) 8.3%,rgb(85,6,53) 16.7%,rgb(96,7,54) 25.0%,rgb(106,9,57) 33.3%,rgb(115,12,57) 41.7%,rgb(124,16,52) 50.0%,rgb(133,21,47) 58.3%,rgb(141,26,45) 66.7%,rgb(148,30,41) 75.0%,rgb(155,33,37) 83.3%,rgb(162,34,33) 91.7%,rgb(168,35,29) 100.0%)"></div>
<div class="ws" style="top:1020px;height:11px;background:linear-gradient(90deg,rgb(62,3,43) 0.0%,rgb(73,4,48) 8.3%,rgb(85,5,53) 16.7%,rgb(96,7,55) 25.0%,rgb(105,9,57) 33.3%,rgb(115,12,57) 41.7%,rgb(124,16,52) 50.0%,rgb(133,21,47) 58.3%,rgb(140,26,45) 66.7%,rgb(148,30,42) 75.0%,rgb(155,33,37) 83.3%,rgb(161,34,33) 91.7%,rgb(168,35,29) 100.0%)"></div>
<div class="ws" style="top:1031px;height:11px;background:linear-gradient(90deg,rgb(62,3,43) 0.0%,rgb(73,4,48) 8.3%,rgb(84,5,53) 16.7%,rgb(95,6,55) 25.0%,rgb(105,9,57) 33.3%,rgb(114,12,57) 41.7%,rgb(123,16,52) 50.0%,rgb(132,21,47) 58.3%,rgb(140,26,46) 66.7%,rgb(147,30,42) 75.0%,rgb(154,33,37) 83.3%,rgb(161,34,33) 91.7%,rgb(167,35,30) 100.0%)"></div>
<div class="ws" style="top:1042px;height:11px;background:linear-gradient(90deg,rgb(61,3,43) 0.0%,rgb(72,4,48) 8.3%,rgb(84,5,53) 16.7%,rgb(95,6,55) 25.0%,rgb(104,8,57) 33.3%,rgb(114,11,57) 41.7%,rgb(123,16,53) 50.0%,rgb(132,21,48) 58.3%,rgb(139,26,46) 66.7%,rgb(147,30,42) 75.0%,rgb(154,33,37) 83.3%,rgb(160,34,33) 91.7%,rgb(167,35,30) 100.0%)"></div>
<div class="ws" style="top:1053px;height:11px;background:linear-gradient(90deg,rgb(61,3,43) 0.0%,rgb(72,4,48) 8.3%,rgb(83,5,53) 16.7%,rgb(94,6,55) 25.0%,rgb(104,8,57) 33.3%,rgb(113,11,58) 41.7%,rgb(122,16,53) 50.0%,rgb(131,21,48) 58.3%,rgb(139,26,46) 66.7%,rgb(146,29,42) 75.0%,rgb(153,32,38) 83.3%,rgb(160,34,34) 91.7%,rgb(166,35,30) 100.0%)"></div>
<div class="ws" style="top:1064px;height:11px;background:linear-gradient(90deg,rgb(60,2,43) 0.0%,rgb(71,4,48) 8.3%,rgb(83,5,53) 16.7%,rgb(94,6,55) 25.0%,rgb(103,8,57) 33.3%,rgb(113,11,58) 41.7%,rgb(122,16,53) 50.0%,rgb(131,21,48) 58.3%,rgb(138,25,47) 66.7%,rgb(146,29,43) 75.0%,rgb(153,32,38) 83.3%,rgb(159,34,34) 91.7%,rgb(166,35,30) 100.0%)"></div>
<div class="ws" style="top:1075px;height:5px;background:linear-gradient(90deg,rgb(60,2,43) 0.0%,rgb(71,4,48) 8.3%,rgb(82,5,53) 16.7%,rgb(93,6,55) 25.0%,rgb(103,8,57) 33.3%,rgb(112,11,58) 41.7%,rgb(121,16,53) 50.0%,rgb(130,21,49) 58.3%,rgb(138,25,47) 66.7%,rgb(145,29,43) 75.0%,rgb(152,32,38) 83.3%,rgb(159,33,34) 91.7%,rgb(166,34,30) 100.0%)"></div>
<!--/WALL-->
<svg class="abs" style="left:0;top:0" width="1920" height="1080" viewBox="0 0 1920 1080">
 <defs><linearGradient id="fl" gradientUnits="userSpaceOnUse" x1="0" y1="0" x2="1600" y2="0"><stop offset="0" stop-color="rgba(240,20,160,0.11)"/><stop offset="1" stop-color="rgba(255,60,120,0.15)"/></linearGradient></defs>
 <g fill="none" stroke="rgba(255,158,66,0.12)" stroke-width="11" stroke-linejoin="miter">
  <path d="M1100 212 A386 386 0 0 1 1605 135 Q1612 226 1609 320 L1581 329 L1580 266 Q1470 350 1390 485"/>
  <circle cx="1405" cy="168.5" r="23.5" stroke-width="12"/>
 </g>
 <g fill="none" stroke="rgba(240,30,160,0.11)" stroke-width="11">
  <path d="M-20 866 C250 850 480 885 646 941 Q600 850 590 700"/>
 </g>
 <path d="M1920 900 Q1850 975 1770 1085 L1925 1085 Z" fill="rgba(255,110,60,0.045)"/>
 <path d="M-20 1003 H1596 L1370 930" fill="none" stroke="url(#fl)" stroke-width="12"/>
 <g fill="none" stroke="rgba(255,158,66,0.08)" stroke-width="2.5">
  <circle cx="1373" cy="308" r="275"/>
  <path d="M1649 306 Q1480 360 1320 480"/>
  <path d="M1150 300 Q1330 370 1420 490"/>
  <path d="M1584 330 Q1570 400 1550 490"/>
  <path d="M1640 224 L1580 266"/>
  <path d="M1614 253 L1648 286"/>
  <path d="M1549 100 Q1580 200 1640 225"/>
  <path d="M955 110 Q1000 60 1052 22"/>
  <path d="M1183 110 Q1205 75 1240 45"/>
 </g>
 <g fill="none" stroke="rgba(240,40,150,0.08)" stroke-width="2.5">
  <path d="M646 941 Q820 990 1000 1085"/>
  <path d="M646 941 Q700 1010 760 1090"/>
  <path d="M680 1009 Q820 1030 990 1075"/>
  <path d="M1095 967 L1097 1005"/>
  <path d="M1237 967 L1237 1005"/>
  <path d="M1237 1009 Q1240 1045 1242 1085"/>
  <path d="M1435 968 Q1390 1030 1345 1085"/>
  <path d="M960 1045 L1015 1010"/>
  <path d="M330 22 Q370 65 406 110"/>
  <path d="M582 22 Q540 65 504 110"/>
 </g>
</svg>
</div>

<div id="topbar">
  <div class="abs tb" style="left:12px;top:4px">Обзор</div>
  <svg class="abs" style="left:78px;top:7px" width="16" height="14" viewBox="0 0 16 14">
    <rect x="0.5" y="0.5" width="15" height="13" fill="#c9c9c9" rx="1"/>
    <rect x="2" y="2" width="12" height="10" fill="#1e1e1e"/>
    <path d="M3.5 3.5 L6 5.2 L3.5 6.8" stroke="#eee" stroke-width="1" fill="none"/>
    <rect x="6" y="7.5" width="3" height="1" fill="#eee"/>
  </svg>
  <div class="abs tb" style="left:100px;top:4px">Терминал</div>
  <svg class="abs" style="left:178px;top:11px" width="10" height="6"><path d="M0 0 H10 L5 5.5 Z" fill="#fff"/></svg>
  <div class="abs tb" style="left:964px;top:3px;letter-spacing:-0.4px">Вт, 15:21</div>
  <div class="abs tb" style="left:1748px;top:4px">en</div>
  <svg class="abs" style="left:1771px;top:10px" width="10" height="6"><path d="M0 0 H10 L5 5.5 Z" fill="#fff"/></svg>
  <svg class="abs" style="left:1812px;top:5px" width="17" height="16" viewBox="0 0 17 16">
    <rect x="6" y="0.5" width="4.5" height="4.5" fill="#f2f2f2"/>
    <rect x="0.5" y="11" width="5" height="5" fill="#f2f2f2"/>
    <rect x="10.5" y="11" width="5" height="5" fill="#f2f2f2"/>
    <path d="M8.2 5 V8 M3 11 V8 H13 V11" stroke="#f2f2f2" stroke-width="1.3" fill="none"/>
  </svg>
  <svg class="abs" style="left:1840px;top:6px" width="16" height="14" viewBox="0 0 16 14">
    <path d="M0.5 4.5 H3 L7 1 V13 L3 9.5 H0.5 Z" fill="#f2f2f2"/>
    <path d="M8.8 4.5 Q10 7 8.8 9.5" stroke="#f2f2f2" stroke-width="1.3" fill="none"/>
    <path d="M10.8 2.8 Q13 7 10.8 11.2" stroke="#f2f2f2" stroke-width="1.3" fill="none"/>
    <path d="M12.8 1 Q16 7 12.8 13" stroke="rgba(242,242,242,0.45)" stroke-width="1.3" fill="none"/>
  </svg>
  <svg class="abs" style="left:1870px;top:5px" width="14" height="17" viewBox="0 0 14 17">
    <rect x="4.5" y="0.5" width="5" height="2.5" fill="rgba(235,170,150,0.7)"/>
    <rect x="1.5" y="3" width="11" height="13" fill="rgba(235,170,150,0.12)" stroke="rgba(235,170,150,0.75)" stroke-width="2"/>
    <path d="M8.5 4.5 L3.8 10 H6.6 L5.3 14.5 L10.2 8.6 H7.4 Z" fill="#f4f4f4"/>
  </svg>
  <svg class="abs" style="left:1895px;top:10px" width="10" height="6"><path d="M0 0 H10 L5 5.5 Z" fill="#fff"/></svg>
</div>

<div id="dock">
  <!-- running dots -->
  <div class="abs dot" style="left:2px;top:29px"></div>
  <div class="abs dot" style="left:2px;top:93px"></div>
  <div class="abs dot" style="left:2px;top:285px"></div>
  <div class="abs dot" style="left:2px;top:348px"></div>
  <!-- chrome -->
  <svg class="abs" style="left:10px;top:9px" width="46" height="46" viewBox="0 0 46 46">
    <circle cx="23" cy="23" r="22.5" fill="#1da462"/>
    <path d="M23 23 L3.5 11.75 A22.5 22.5 0 0 1 42.5 11.75 Z" fill="#dd5144"/>
    <path d="M23 23 L42.5 11.75 A22.5 22.5 0 0 1 23 45.5 Z" fill="#ffcd46"/>
    <path d="M3.5 11.75 L13 28.5 L23 23 Z" fill="#1da462"/>
    <path d="M23 45.5 L33 28 L23 23 Z" fill="#ffcd46"/>
    <path d="M23 12.5 H42.5 L33 28 Z" fill="#ffcd46"/>
    <path d="M3.5 11.75 L23 12.5 L13 28.5 Z" fill="#dd5144"/>
    <path d="M13 28.5 L23 45.5 L33 28 Z" fill="#1da462"/>
    <circle cx="23" cy="23" r="10" fill="#fff"/>
    <circle cx="23" cy="23" r="8" fill="#4c8bf5"/>
  </svg>
  <!-- files -->
  <svg class="abs" style="left:12px;top:73px" width="42" height="44" viewBox="0 0 42 44">
    <defs><linearGradient id="fg" x1="0" y1="0" x2="0" y2="1"><stop offset="0" stop-color="#e2e2e2"/><stop offset="1" stop-color="#b4b4b4"/></linearGradient>
    <linearGradient id="fg2" x1="0" y1="0" x2="0" y2="1"><stop offset="0" stop-color="#d0d0d0"/><stop offset="1" stop-color="#aaaaaa"/></linearGradient></defs>
    <rect x="0.5" y="0.5" width="41" height="43" rx="2" fill="url(#fg)" stroke="#9a9a9a" stroke-width="1"/>
    <rect x="3" y="8.5" width="36" height="9.5" fill="#1e1a16"/>
    <rect x="4" y="11.5" width="34" height="6.5" fill="#e9a656"/>
    <rect x="4" y="13" width="34" height="1.2" fill="#f7d8a0"/>
    <rect x="1.5" y="18" width="39" height="25" fill="url(#fg2)" stroke="#c8c8c8" stroke-width="0.8"/>
    <rect x="14" y="27" width="14" height="11" rx="1.5" fill="#cfcfcf" stroke="#e6e6e6" stroke-width="1"/>
    <rect x="16.2" y="29.2" width="9.6" height="6" rx="1" fill="#f0f0f0" stroke="#333" stroke-width="1.1"/>
  </svg>
  <!-- software -->
  <svg class="abs" style="left:12px;top:138px" width="42" height="43" viewBox="0 0 42 43">
    <defs><linearGradient id="bg1" x1="0" y1="0" x2="0" y2="1"><stop offset="0" stop-color="#f5904a"/><stop offset="1" stop-color="#ea7436"/></linearGradient></defs>
    <path d="M15 8 V3.5 Q15 1.5 17 1.5 H25 Q27 1.5 27 3.5 V8" fill="none" stroke="#e36a2a" stroke-width="3.2"/>
    <path d="M1.5 6 H40.5 L42 9.5 V42.5 H0 V9.5 Z" fill="url(#bg1)"/>
    <path d="M1.5 6 H40.5 L42 9.5 H0 Z" fill="#f7a060"/>
    <path d="M0 9.5 H42 V11 H0 Z" fill="#d9642a" opacity="0.6"/>
    <path d="M20.5 15 L11.5 35.5 H17 L20.5 26.5 L24 35.5 H29.5 Z" fill="#fff"/>
    <rect x="11" y="27.5" width="20" height="5" rx="2.5" fill="#fff"/>
    <rect x="13.5" y="29" width="11" height="2" rx="1" fill="#e0602a"/>
  </svg>
  <!-- calculator -->
  <svg class="abs" style="left:16px;top:203px" width="34" height="42" viewBox="0 0 34 42">
    <rect x="0.5" y="0.5" width="33" height="41" rx="3" fill="#b6b6b6" stroke="#8a8a8a"/>
    <rect x="3" y="3" width="28" height="10" rx="1" fill="#e3e3e3"/>
    <g fill="#3a3a3a">
      <rect x="3" y="16" width="6" height="4.5" rx="1"/><rect x="10" y="16" width="6" height="4.5" rx="1"/><rect x="17" y="16" width="6" height="4.5" rx="1"/>
      <rect x="3" y="22" width="6" height="4.5" rx="1"/><rect x="10" y="22" width="6" height="4.5" rx="1"/><rect x="17" y="22" width="6" height="4.5" rx="1"/>
      <rect x="3" y="28" width="6" height="4.5" rx="1"/><rect x="10" y="28" width="6" height="4.5" rx="1"/><rect x="17" y="28" width="6" height="4.5" rx="1"/>
      <rect x="3" y="34" width="13" height="4.5" rx="1"/><rect x="17" y="34" width="6" height="4.5" rx="1"/>
    </g>
    <g fill="#cfd3d6"><rect x="24" y="16" width="6.5" height="4.5" rx="1"/><rect x="24" y="22" width="6.5" height="4.5" rx="1"/><rect x="24" y="28" width="6.5" height="10.5" rx="1"/></g>
  </svg>
  <!-- terminal highlight -->
  <div class="abs" style="left:2px;top:257px;width:62px;height:61px;border-radius:4px;background:rgba(255,255,255,0.2)"></div>
  <svg class="abs" style="left:11px;top:271px" width="45" height="37" viewBox="0 0 45 37">
    <rect x="0" y="0" width="45" height="37" rx="1.5" fill="#c8c8c8"/>
    <rect x="3" y="3" width="39" height="31" fill="#262626"/>
    <path d="M7 10 L13.5 14 L7 18" stroke="#f0f0f0" stroke-width="2.4" fill="none" stroke-linecap="square"/>
    <rect x="16" y="20" width="9" height="2.4" fill="#f0f0f0"/>
  </svg>
  <!-- gedit -->
  <svg class="abs" style="left:12px;top:332px" width="45" height="37" viewBox="0 0 45 37">
    <rect x="1.5" y="3" width="34" height="33" fill="#f4f4f4" stroke="#c8c8c8"/>
    <g fill="#888"><rect x="5" y="9" width="24" height="1"/><rect x="5" y="13" width="20" height="1"/><rect x="5" y="17" width="24" height="1"/><rect x="5" y="21" width="16" height="1"/><rect x="5" y="26" width="22" height="1"/><rect x="5" y="30" width="18" height="1"/></g>
    <g fill="none" stroke="#777" stroke-width="1"><circle cx="5" cy="3" r="2"/><circle cx="9.5" cy="3" r="2"/><circle cx="14" cy="3" r="2"/><circle cx="18.5" cy="3" r="2"/><circle cx="23" cy="3" r="2"/><circle cx="27.5" cy="3" r="2"/><circle cx="32" cy="3" r="2"/></g>
    <path d="M17 30 L38 8 L42 12 L21 33 L16 34 Z" fill="#f0a030"/>
    <path d="M38 8 L40 6 Q42 5 43 6.5 Q44 8 43 9 L42 12 Z" fill="#e06050"/>
    <path d="M16 34 L17 30 L19 32 Z" fill="#333"/>
  </svg>
  <!-- app grid -->
  <svg class="abs" style="left:17px;top:1004px" width="32" height="32" viewBox="0 0 32 32">
    <g fill="#f4eef2"><circle cx="4" cy="4" r="3"/><circle cx="16" cy="4" r="3"/><circle cx="28" cy="4" r="3"/><circle cx="4" cy="16" r="3"/><circle cx="16" cy="16" r="3"/><circle cx="28" cy="16" r="3"/><circle cx="4" cy="28" r="3"/><circle cx="16" cy="28" r="3"/><circle cx="28" cy="28" r="3"/></g>
  </svg>
</div>

<!-- desktop icons -->
<svg class="abs" style="left:113px;top:46px" width="40" height="48" viewBox="0 0 40 48">
  <defs><linearGradient id="tl" x1="0" y1="0" x2="0" y2="1"><stop offset="0" stop-color="#f0f0f0"/><stop offset="1" stop-color="#a8a8a8"/></linearGradient></defs>
  <path d="M3.5 9 L6.5 43.5 Q7 46 10 46 H30 Q33 46 33.5 43.5 L36.5 9 Z" fill="rgba(235,200,210,0.25)" stroke="rgba(255,255,255,0.4)" stroke-width="1"/>
  <g fill="#dcdcdc"><circle cx="11" cy="23" r="4.5"/><circle cx="19" cy="20" r="5"/><circle cx="28" cy="21" r="5"/><circle cx="10" cy="31" r="4.5"/><circle cx="30" cy="30" r="4.5"/><circle cx="11" cy="39" r="4.5"/><circle cx="29" cy="39" r="4.5"/></g>
  <g fill="#f2f2f2"><circle cx="15" cy="26" r="4.5"/><circle cx="24" cy="25" r="5"/><circle cx="19" cy="32" r="5.5"/><circle cx="25" cy="35" r="4.5"/><circle cx="15" cy="38" r="4.5"/><circle cx="21" cy="41" r="4"/></g>
  <g fill="#c4c4c4"><circle cx="20" cy="28" r="1.3"/><circle cx="13" cy="34" r="1.2"/><circle cx="27" cy="30" r="1.2"/><circle cx="22" cy="38" r="1.2"/></g>
  <ellipse cx="20" cy="7.5" rx="18.5" ry="5.8" fill="url(#tl)"/>
  <ellipse cx="20" cy="8" rx="14.5" ry="2.8" fill="#8a6a72"/>
</svg>
<div class="abs dlab" style="left:104px;top:98px">Корзина</div>
<svg class="abs" style="left:115px;top:137px" width="10" height="47" viewBox="0 0 10 47">
  <rect x="0" y="0" width="10" height="47" fill="#f3eeee"/>
  <g fill="#8fa0c0"><rect x="4" y="8" width="6" height="1.5"/><rect x="4" y="13" width="6" height="1.5"/><rect x="4" y="18" width="6" height="1.5"/><rect x="4" y="23" width="6" height="1.5"/><rect x="4" y="28" width="6" height="1.5"/><rect x="4" y="33" width="6" height="1.5"/><rect x="4" y="38" width="6" height="1.5"/></g>
</svg>
<div class="abs dlab" style="left:111px;top:186px">st</div>
<div class="abs dlab" style="left:106px;top:202px">de</div>

<!-- gedit -->
<div class="abs" id="gedit" style="left:121px;top:106px;width:1108px;height:641px;box-shadow:0 3px 16px rgba(0,0,0,0.45);border-radius:6px 6px 0 0">
  <div class="abs" style="left:0;top:0;width:1108px;height:42px;background:#3c3b37;border-radius:6px 6px 0 0;border-top:1px solid #48463f"></div>
  <!-- buttons -->
  <div class="abs btn" style="left:10px;top:4px;width:92px;height:33px"></div>
  <div class="abs gt" style="left:17px;top:12px">Открыть</div>
  <svg class="abs" style="left:80px;top:18px" width="10" height="6"><path d="M0 0 H10 L5 5.5 Z" fill="#bdbab3"/></svg>
  <div class="abs btn" style="left:112px;top:4px;width:32px;height:33px"></div>
  <svg class="abs" style="left:119px;top:12px" width="18" height="16" viewBox="0 0 18 16">
    <path d="M3.5 13 V3 Q3.5 1.5 5 1.5 H13 Q14.5 1.5 14.5 3 V13" fill="none" stroke="#c8c5be" stroke-width="1.6"/>
    <rect x="1.5" y="11.2" width="15" height="3.3" fill="none" stroke="#c8c5be" stroke-width="1.6"/>
    <path d="M9 4 V9.5 M6.2 6.8 H11.8" stroke="#c8c5be" stroke-width="1.8"/>
  </svg>
  <div class="abs" style="left:424px;top:6px;width:262px;text-align:center;font-size:14px;letter-spacing:0.4px;font-weight:bold;color:#9d9a93">test2.c</div>
  <div class="abs" style="left:424px;top:23px;width:262px;text-align:center;font-size:12px;color:#6f6c66">~/C++ проекты</div>
  <div class="abs btn" style="left:894px;top:4px;width:92px;height:33px"></div>
  <div class="abs gt" style="left:902px;top:12px">Сохранить</div>
  <div class="abs btn" style="left:996px;top:4px;width:32px;height:33px"></div>
  <svg class="abs" style="left:1005px;top:14px" width="14" height="12"><g fill="#d7d3cc"><rect x="2" y="1" width="10" height="2"/><rect x="2" y="5" width="10" height="2"/><rect x="2" y="9" width="10" height="2"/></g></svg>
  <div class="abs" style="left:1038px;top:7px;width:1px;height:30px;background:#363531"></div>
  <svg class="abs" style="left:1043px;top:12px" width="60" height="17" viewBox="0 0 60 17">
    <g fill="#5f5d58"><circle cx="8.5" cy="8.5" r="8"/><circle cx="28.5" cy="8.5" r="8"/><circle cx="48.5" cy="8.5" r="8"/></g>
    <g stroke="#3f3e3a" stroke-width="1.2" fill="none"><path d="M4.5 9 H12.5"/><rect x="25" y="5" width="7" height="7"/><path d="M45.5 5.5 L51.5 11.5 M51.5 5.5 L45.5 11.5"/></g>
  </svg>
  <!-- editor -->
  <div class="abs" style="left:0;top:42px;width:24px;height:574px;background:#000"></div>
  <div class="abs" style="left:24px;top:42px;width:1084px;height:574px;background:#2e3436"></div>
  <div class="abs" style="left:24px;top:294px;width:1084px;height:18px;background:#555753"></div>
  <div class="abs code ln" style="left:0;top:44px;width:21px;text-align:right">1
2
3
4
5
6
7
8
9
10
11
12
13
14
<b style="color:#c4c6c0">15</b>
16</div>
  <div class="abs code" style="left:26px;top:44px;color:#d3d7cf"><span class="pp">#include</span> <span class="st">&lt;stdio.h&gt;</span>

<span class="ty">int</span> main()
{
    <span class="ty">int</span>
        number,
        result = <span class="st">0</span>;
    scanf(<span class="st">"</span><span class="sp">%d</span><span class="st">"</span>, &amp;number);

    <b style="color:#fff">while</b>(number)
    {
        result += number % <span class="st">10</span>;
        number /= <span class="st">10</span>;
    }
    printf(<span class="st">"Сумма числа = </span><span class="sp">%d\n</span><span class="st">"</span>, result);
}</div>
  <!-- statusbar -->
  <div class="abs" style="left:0;top:616px;width:1108px;height:25px;background:#f1f0ef;border-top:1px solid #e0ddd9"></div>
  <div class="abs" style="left:654px;top:620px;font-size:14px;color:#6b6b6b">C</div>
  <svg class="abs" style="left:669px;top:626px" width="10" height="6"><path d="M0 0 H10 L5 5.5 Z" fill="#6b6b6b"/></svg>
  <div class="abs" style="left:696px;top:620px;font-size:14px;letter-spacing:0.65px;color:#6b6b6b;white-space:nowrap">Ширина табуляции: 4</div>
  <svg class="abs" style="left:853px;top:626px" width="10" height="6"><path d="M0 0 H10 L5 5.5 Z" fill="#6b6b6b"/></svg>
</div>

<!-- terminal -->
<div class="abs" id="term" style="left:979px;top:479px;width:733px;height:488px;box-shadow:0 5px 24px rgba(0,0,0,0.55);border-radius:6px 6px 0 0">
  <div class="abs" style="left:0;top:0;width:733px;height:54px;background:linear-gradient(#5a5852 0px,#4a4843 14px,#3f3e3a 28px,#3c3b37 54px);border-radius:6px 6px 0 0;border-top:1px solid #666259"></div>
  <div class="abs" style="left:1px;top:6px;width:733px;text-align:center;font-size:15px;letter-spacing:-0.1px;font-weight:bold;color:#dfdbd2;white-space:nowrap">browze@Ivan-PC: ~/C++ проекты</div>
  <svg class="abs" style="left:670px;top:6px" width="60" height="18" viewBox="0 0 60 18">
    <defs><linearGradient id="wb" x1="0" y1="0" x2="0" y2="1"><stop offset="0" stop-color="#7a7873"/><stop offset="1" stop-color="#5e5c57"/></linearGradient>
    <linearGradient id="wc" x1="0" y1="0" x2="0" y2="1"><stop offset="0" stop-color="#f26b3a"/><stop offset="1" stop-color="#e0521e"/></linearGradient></defs>
    <circle cx="9.5" cy="9" r="8.2" fill="url(#wb)" stroke="#3a3935" stroke-width="0.8"/>
    <circle cx="29.5" cy="9" r="8.2" fill="url(#wb)" stroke="#3a3935" stroke-width="0.8"/>
    <circle cx="49.5" cy="9" r="8.2" fill="url(#wc)" stroke="#3a3935" stroke-width="0.8"/>
    <path d="M5.5 9.5 H13.5" stroke="#3a3935" stroke-width="1.1"/>
    <rect x="26" y="5.5" width="7" height="7" fill="none" stroke="#3a3935" stroke-width="1.1"/>
    <path d="M46.5 6 L52.5 12 M52.5 6 L46.5 12" stroke="#3a2a20" stroke-width="1.2"/>
  </svg>
  <div class="abs tm" style="left:6px;top:34px">Файл</div>
  <div class="abs tm" style="left:57px;top:34px">Правка</div>
  <div class="abs tm" style="left:120px;top:34px">Вид</div>
  <div class="abs tm" style="left:159px;top:34px">Поиск</div>
  <div class="abs tm" style="left:214px;top:34px">Терминал</div>
  <div class="abs tm" style="left:296px;top:34px">Справка</div>
  <div class="abs" style="left:0;top:54px;width:729px;height:434px;background:#300a24"></div>
  <div class="abs" style="left:729px;top:54px;width:4px;height:434px;background:#d4623e"></div>
  <div class="abs code" style="left:1px;top:57px;color:#fff"><span class="tg">browze@Ivan-PC</span>:<span class="tb2">~/C++ проекты</span>$ gcc test2.c -o test2
<span class="tg">browze@Ivan-PC</span>:<span class="tb2">~/C++ проекты</span>$ ./test2
1234
Сумма числа = 10<span class="tg">browze@Ivan-PC</span>:<span class="tb2">~/C++ проекты</span>$ gcc test2.c -o test2
<span class="tg">browze@Ivan-PC</span>:<span class="tb2">~/C++ проекты</span>$ ./test2
1234
Сумма числа = 10
<span class="tg">browze@Ivan-PC</span>:<span class="tb2">~/C++ проекты</span>$ </div>
  <div class="abs" style="left:271px;top:183px;width:10px;height:18px;border:1px solid #fff"></div>
</div>
</body></html>
